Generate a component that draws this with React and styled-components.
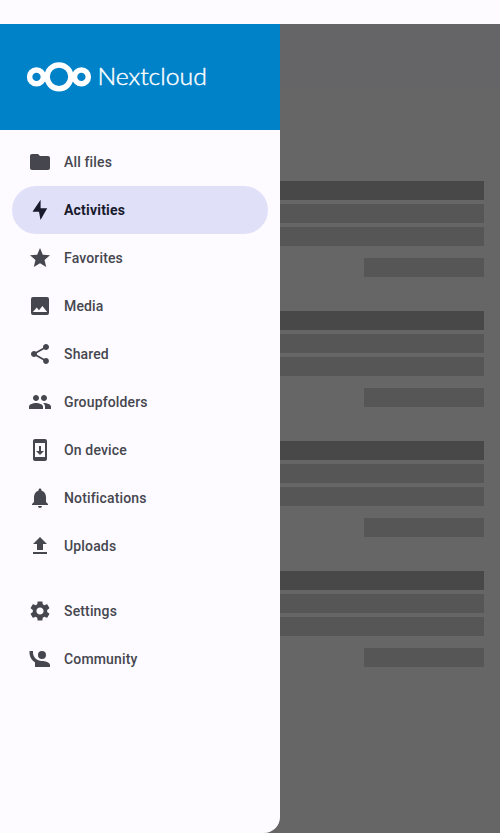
import React from "react";
import styled, { createGlobalStyle } from "styled-components";

const GlobalStyle = createGlobalStyle`
  * { box-sizing: border-box; }
  body { margin: 0; background: #fdfbff; font-family: Roboto, "Liberation Sans", sans-serif; }
`;

const Screen = styled.div`
  display: flex;
  flex-direction: column;
  width: 500px;
  height: 833px;
  overflow: hidden;
`;
const StatusBar = styled.div`
  flex: 0 0 24px;
  background: #fdfbff;
`;
const Body = styled.div`
  display: grid;
  flex: 1;
  grid-template-columns: 280px 1fr;
  background: #666666;
`;
const Drawer = styled.aside`
  display: flex;
  flex-direction: column;
  background: #fdfbff;
  border-bottom-right-radius: 16px;
`;
const Header = styled.header`
  height: 106px;
  padding: 36px 0 0 24px;
  background: #0082c9;
`;
const Logo = styled.svg`
  display: block;
`;
const Menu = styled.nav`
  display: flex;
  flex-direction: column;
  padding: 8px 12px 0;
`;
const Section = styled.div`
  display: flex;
  flex-direction: column;
  margin-bottom: 17px;
`;
const Item = styled.a`
  display: flex;
  align-items: center;
  gap: 12px;
  height: 48px;
  padding-left: 16px;
  border-radius: 24px;
  font-size: 14px;
  line-height: 20px;
  letter-spacing: ${(p) => (p.$active ? "0.2px" : "0.15px")};
  font-weight: ${(p) => (p.$active ? 700 : 500)};
  color: ${(p) => (p.$active ? "#191a2c" : "#46464f")};
  background: ${(p) => (p.$active ? "#e0e0f9" : "transparent")};
`;
const Icon = styled.svg`
  width: 24px;
  height: 24px;
  fill: currentColor;
`;
const Content = styled.main`
  display: flex;
  flex-direction: column;
`;
const Toolbar = styled.div`
  height: 64px;
  background: #656467;
`;
const Feed = styled.div`
  display: flex;
  flex-direction: column;
  gap: 34px;
  padding: 93px 16px 0 0;
`;
const Card = styled.div`
  display: flex;
  flex-direction: column;
  gap: 4px;
`;
const Line = styled.div`
  height: 19px;
  background: ${(p) => (p.$title ? "#484848" : "#565656")};
`;
const Stamp = styled(Line)`
  width: 120px;
  align-self: flex-end;
  margin-top: 8px;
`;

const paths = {
  folder: "M10 4H4c-1.1 0-2 .9-2 2v12c0 1.1.9 2 2 2h16c1.1 0 2-.9 2-2V8c0-1.1-.9-2-2-2h-8l-2-2z",
  bolt: "M12.6 1.8L4.5 13.7H11L12.5 22L19.2 10.2H12.6z",
  star: "M12 17.27L18.18 21l-1.64-7.03L22 9.24l-7.19-.61L12 2 9.19 8.63 2 9.24l5.46 4.73L5.82 21z",
  image: "M5 3h14a2 2 0 0 1 2 2v14a2 2 0 0 1-2 2H5a2 2 0 0 1-2-2V5a2 2 0 0 1 2-2zM4.8 18h14.4l-4.8-6-3.4 4.3-2.2-2.9z",
  share: "M18 16.08c-.76 0-1.44.3-1.96.77L8.91 12.7c.05-.23.09-.46.09-.7s-.04-.47-.09-.7l7.05-4.11c.54.5 1.25.81 2.04.81 1.66 0 3-1.34 3-3s-1.34-3-3-3-3 1.34-3 3c0 .24.04.47.09.7L8.04 9.81C7.5 9.31 6.79 9 6 9c-1.66 0-3 1.34-3 3s1.34 3 3 3c.79 0 1.5-.31 2.04-.81l7.12 4.16c-.05.21-.08.43-.08.65 0 1.61 1.31 2.92 2.92 2.92s2.92-1.31 2.92-2.92-1.31-2.92-2.92-2.92z",
  group: "M16 11c1.66 0 2.99-1.34 2.99-3S17.66 5 16 5c-1.66 0-3 1.34-3 3s1.34 3 3 3zm-8 0c1.66 0 2.99-1.34 2.99-3S9.66 5 8 5C6.34 5 5 6.34 5 8s1.34 3 3 3zm0 2c-2.33 0-7 1.17-7 3.5V19h14v-2.5c0-2.33-4.67-3.5-7-3.5zm8 0c-.29 0-.62.02-.97.05 1.16.84 1.97 1.97 1.97 3.45V19h6v-2.5c0-2.33-4.67-3.5-7-3.5z",
  device: "M17 1.01L7 1c-1.1 0-2 .9-2 2v18c0 1.1.9 2 2 2h10c1.1 0 2-.9 2-2V3c0-1.1-.9-1.99-2-1.99zM17 19H7V5h10v14zm-1-6h-3V8h-2v5H8l4 4 4-4z",
  bell: "M12 22c1.1 0 2-.9 2-2h-4c0 1.1.89 2 2 2zm6-6v-5c0-3.07-1.64-5.64-4.5-6.32V4c0-.83-.67-1.5-1.5-1.5s-1.5.67-1.5 1.5v.68C7.63 5.36 6 7.92 6 11v5l-2 2v1h16v-1l-2-2z",
  upload: "M9 16h6v-6h4l-7-7-7 7h4zm-4 2h14v2H5z",
  settings: "M19.14 12.94c.04-.3.06-.61.06-.94 0-.32-.02-.64-.07-.94l2.03-1.58c.18-.14.23-.41.12-.61l-1.92-3.32c-.12-.22-.37-.29-.59-.22l-2.39.96c-.5-.38-1.03-.7-1.62-.94l-.36-2.54c-.04-.24-.24-.41-.48-.41h-3.84c-.24 0-.43.17-.47.41l-.36 2.54c-.59.24-1.13.57-1.62.94l-2.39-.96c-.22-.08-.47 0-.59.22L2.74 8.87c-.12.21-.08.47.12.61l2.03 1.58c-.05.3-.09.63-.09.94s.02.64.07.94l-2.03 1.58c-.18.14-.23.41-.12.61l1.92 3.32c.12.22.37.29.59.22l2.39-.96c.5.38 1.03.7 1.62.94l.36 2.54c.05.24.24.41.48.41h3.84c.24 0 .44-.17.47-.41l.36-2.54c.59-.24 1.13-.56 1.62-.94l2.39.96c.22.08.47 0 .59-.22l1.92-3.32c.12-.22.07-.47-.12-.61l-2.01-1.58zM12 15.6c-1.98 0-3.6-1.62-3.6-3.6s1.62-3.6 3.6-3.6 3.6 1.62 3.6 3.6-1.62 3.6-3.6 3.6z",
  community: "M1.5 4v1.5c0 4.15 2.21 7.78 5.5 9.8V20h15v-2c0-2.66-5.33-4-8-4h-.25C9 14 5 10 5 5.5V4M14 4a4 4 0 1 0 0 8 4 4 0 0 0 0-8z",
};

const sections = [
  [
    ["folder", "All files"],
    ["bolt", "Activities"],
    ["star", "Favorites"],
    ["image", "Media"],
    ["share", "Shared"],
    ["group", "Groupfolders"],
    ["device", "On device"],
    ["bell", "Notifications"],
    ["upload", "Uploads"],
  ],
  [
    ["settings", "Settings"],
    ["community", "Community"],
  ],
];

export default function App() {
  return (
    <>
      <GlobalStyle />
      <Screen>
        <StatusBar />
        <Body>
          <Drawer>
            <Header>
              <Logo width="190" height="34" viewBox="24 60 190 34">
                <g fill="none" stroke="#fff" strokeWidth="5.5">
                  <circle cx="59" cy="76.8" r="11.9" />
                  <circle cx="36.5" cy="76.9" r="6.9" />
                  <circle cx="81.4" cy="76.9" r="6.9" />
                </g>
                <text
                  x="97.4"
                  y="85"
                  fill="#fff"
                  stroke="#fff"
                  strokeWidth="0.4"
                  fontFamily="Lato"
                  fontWeight="300"
                  fontSize="22.5"
                  textLength="109.5"
                  lengthAdjust="spacingAndGlyphs"
                >
                  Nextcloud
                </text>
              </Logo>
            </Header>
            <Menu>
              {sections.map((items, i) => (
                <Section key={i}>
                  {items.map(([icon, label]) => (
                    <Item key={icon} $active={icon === "bolt"}>
                      <Icon viewBox="0 0 24 24">
                        <path fillRule="evenodd" d={paths[icon]} />
                      </Icon>
                      {label}
                    </Item>
                  ))}
                </Section>
              ))}
            </Menu>
          </Drawer>
          <Content>
            <Toolbar />
            <Feed>
              {[0, 1, 2, 3].map((n) => (
                <Card key={n}>
                  <Line $title />
                  <Line />
                  <Line />
                  <Stamp />
                </Card>
              ))}
            </Feed>
          </Content>
        </Body>
      </Screen>
    </>
  );
}
